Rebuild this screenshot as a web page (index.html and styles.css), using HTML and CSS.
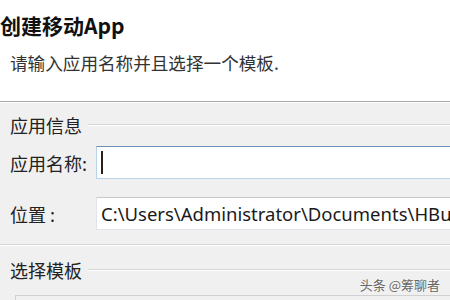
FILE: index.html
```html
<!DOCTYPE html>
<html lang="zh-CN">
<head>
  <meta charset="UTF-8">
  <title>创建移动App</title>
  <link rel="stylesheet" href="styles.css">
</head>
<body>
  <!-- Шапка мастера -->
  <div class="header">
    <h1>创建移动App</h1>
    <p>请输入应用名称并且选择一个模板.</p>
  </div>

  <div class="main">
    <!-- Группа: информация о приложении -->
    <div class="group">
      <div class="group-title"><span>应用信息</span></div>
      <div class="row">
        <label>应用名称:</label>
        <div class="field focused"><span class="caret"></span></div>
      </div>
      <div class="row">
        <label>位置 :</label>
        <div class="field">C:\Users\Administrator\Documents\HBui</div>
      </div>
    </div>

    <!-- Группа: выбор шаблона -->
    <div class="group-title second"><span>选择模板</span></div>
    <div class="templates"></div>
  </div>

  <div class="watermark">头条 @筹聊者</div>
</body>
</html>
```

FILE: styles.css
```css
body {
  margin: 0;
  width: 450px;
  height: 300px;
  overflow: hidden;
  position: relative;
  font-family: "Noto Sans CJK SC", sans-serif;
  color: #1a1a1a;
  background: #f0f0f0;
}
.header {
  background: #ffffff;
  height: 101px;
  border-bottom: 1px solid #a6a6a6;
  overflow: hidden;
}
h1 {
  margin: 10px 0 0 0;
  font-size: 21px;
  line-height: 30px;
  font-weight: bold;
  color: #111;
}
p {
  margin: 11px 0 0 10px;
  font-size: 17.6px;
  line-height: 24px;
  color: #333;
}
.main {
  border-top: 1px solid #ffffff;
}
.group {
  border-bottom: 1px solid #d5d5d5;
  box-shadow: 0 1px 0 #ffffff;
  padding-bottom: 14px;
}
.group-title {
  display: flex;
  align-items: center;
  padding: 10px 0 0 10px;
  font-size: 18px;
  line-height: 24px;
  color: #222;
}
.group-title::after {
  content: "";
  flex: 1;
  margin-left: 6px;
  border-top: 1px solid #d5d5d5;
  border-bottom: 1px solid #ffffff;
}
.group-title.second {
  padding-top: 13px;
}
.row {
  display: flex;
  align-items: center;
  padding-left: 10px;
  margin-top: 9px;
}
.row + .row {
  margin-top: 18px;
}
.row label {
  width: 86px;
  font-size: 18px;
  color: #222;
}
.field {
  flex: 1;
  height: 31px;
  margin-right: -40px;
  padding-left: 4px;
  background: #ffffff;
  border: 1px solid #e2e3ea;
  border-top-color: #c9c9c9;
  font-family: "Noto Sans", sans-serif;
  font-size: 18.5px;
  line-height: 31px;
  color: #1a1a1a;
  white-space: nowrap;
  overflow: hidden;
  display: flex;
  align-items: center;
}
.field.focused {
  border-color: #b9d3ea;
  border-top-color: #6b8fb5;
}
.caret {
  width: 2px;
  height: 23px;
  background: #222;
}
.templates {
  margin: 13px 0 0 15px;
  height: 10px;
  border-top: 1px solid #d0d0d0;
  border-left: 1px solid #d0d0d0;
}
.watermark {
  position: absolute;
  right: 10px;
  bottom: 6px;
  font-size: 13px;
  color: #666;
  text-shadow: 0 0 2px #ffffff;
}
```
